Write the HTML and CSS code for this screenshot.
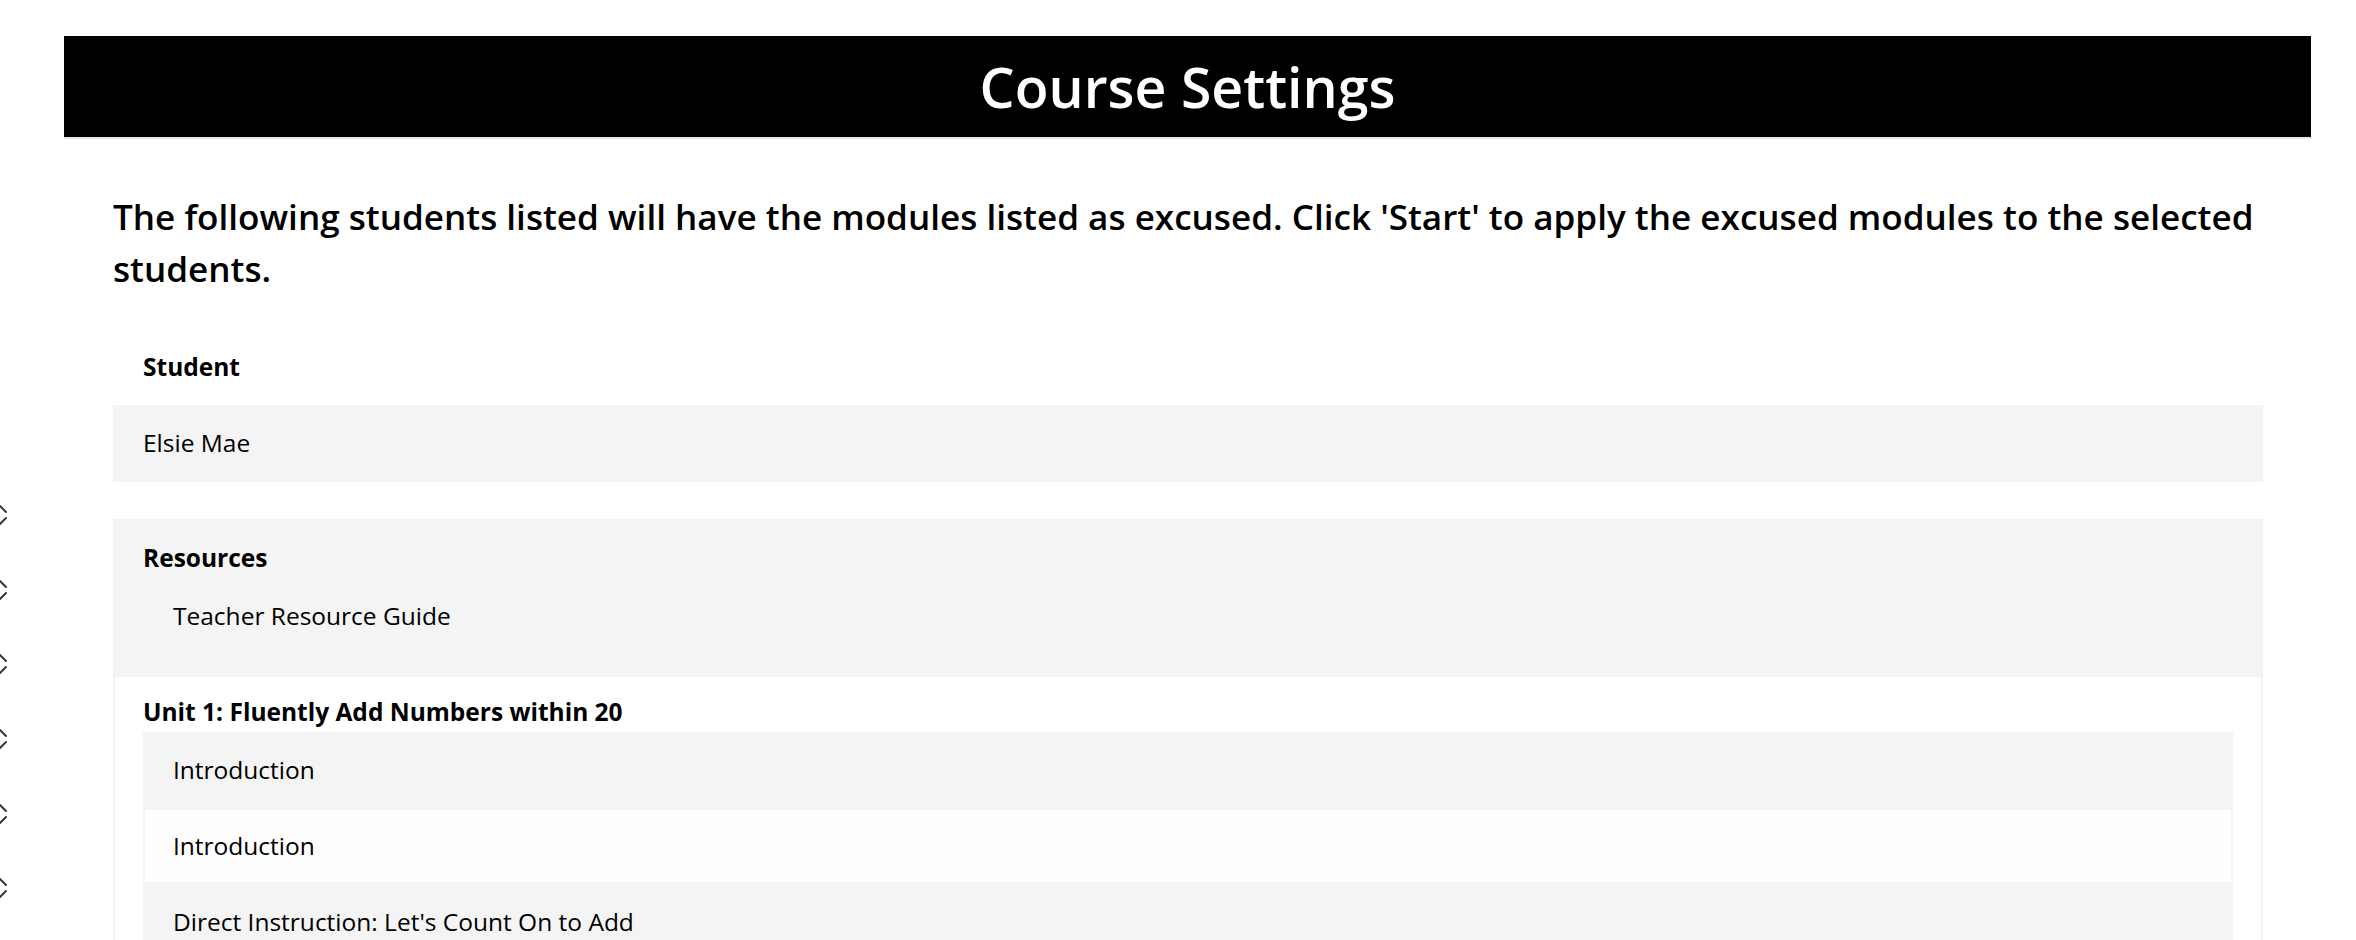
FILE: index.html
```html
<!DOCTYPE html>
<html lang="en">
<head>
<meta charset="utf-8">
<title>Course Settings</title>
<link rel="stylesheet" href="styles.css">
</head>
<body>
<div class="layout">
  <nav class="rail">
    <span class="rail-item"><svg class="chev" viewBox="0 0 20 22" width="20" height="22"><path d="M4 8 L10 2 L16 8 M4 14 L10 20 L16 14"/></svg></span>
    <span class="rail-item"><svg class="chev" viewBox="0 0 20 22" width="20" height="22"><path d="M4 8 L10 2 L16 8 M4 14 L10 20 L16 14"/></svg></span>
    <span class="rail-item"><svg class="chev" viewBox="0 0 20 22" width="20" height="22"><path d="M4 8 L10 2 L16 8 M4 14 L10 20 L16 14"/></svg></span>
    <span class="rail-item"><svg class="chev" viewBox="0 0 20 22" width="20" height="22"><path d="M4 8 L10 2 L16 8 M4 14 L10 20 L16 14"/></svg></span>
    <span class="rail-item"><svg class="chev" viewBox="0 0 20 22" width="20" height="22"><path d="M4 8 L10 2 L16 8 M4 14 L10 20 L16 14"/></svg></span>
    <span class="rail-item"><svg class="chev" viewBox="0 0 20 22" width="20" height="22"><path d="M4 8 L10 2 L16 8 M4 14 L10 20 L16 14"/></svg></span>
  </nav>
  <main class="main">
    <header class="titlebar"><h1 class="title">Course Settings</h1></header>
    <section class="content">
      <p class="intro">The following students listed will have the modules listed as excused. Click 'Start' to apply the excused modules to the selected students.</p>
      <div class="table-head">Student</div>
      <div class="student-row">Elsie Mae</div>

      <div class="group group-shaded">
        <div class="group-title">Resources</div>
        <div class="row">Teacher Resource Guide</div>
      </div>

      <div class="group">
        <div class="group-title">Unit 1: Fluently Add Numbers within 20</div>
        <div class="row row-shaded">Introduction</div>
        <div class="row">Introduction</div>
        <div class="row row-shaded">Direct Instruction: Let's Count On to Add</div>
      </div>
    </section>
  </main>
</div>
</body>
</html>
```

FILE: styles.css
```css
* { box-sizing: border-box; }

html, body {
  margin: 0;
  padding: 0;
  background: #ffffff;
}

body {
  font-family: "Open Sans", "Noto Sans", sans-serif;
  color: #000000;
  overflow: hidden;
}

.layout {
  display: flex;
  align-items: flex-start;
}

.rail {
  flex: 0 0 20px;
  width: 20px;
  margin-left: -10px;
  padding-top: 478px;
  display: flex;
  flex-direction: column;
}

.rail-item {
  height: 74.6px;
  display: flex;
  align-items: center;
  justify-content: center;
}

.chev {
  display: block;
  fill: none;
  stroke: #33383e;
  stroke-width: 2;
  stroke-linecap: round;
  stroke-linejoin: round;
}

.main {
  flex: 1 1 auto;
  min-width: 0;
  margin-left: 54px;
  margin-right: 45px;
}

.titlebar {
  margin-top: 36px;
  height: 101px;
  background: #000000;
  box-shadow: 0 2px 0 #e4e4e4;
  display: flex;
  align-items: center;
  justify-content: center;
}

.title {
  margin: 0;
  color: #ffffff;
  font-size: 55.4px;
  font-weight: 600;
  line-height: 1;
}

.content {
  padding: 0 48px 0 49px;
}

.intro {
  margin: 53px 0 0;
  font-size: 35.1px;
  font-weight: 600;
  line-height: 52px;
}

.table-head {
  margin-top: 34px;
  padding: 21px 30px 20px;
  font-size: 24.5px;
  font-weight: 700;
  line-height: 36px;
}

.student-row {
  background: #f4f4f4;
  padding: 20px 30px 21px;
  font-size: 24.5px;
  line-height: 36px;
}

.group {
  margin-top: 37px;
  border: 2px solid #f4f4f4;
  padding: 17.5px 28px 20.5px;
  background: #ffffff;
}

.group-shaded {
  padding-top: 19px;
  padding-bottom: 19px;
}

.group + .group {
  margin-top: 0;
}

.group-shaded {
  background: #f4f4f4;
}

.group-title {
  font-size: 24.5px;
  font-weight: 700;
  line-height: 36px;
  margin-bottom: 1.5px;
}

.row {
  border: 2px solid #f4f4f4;
  padding: 18px 28px;
  font-size: 24.5px;
  line-height: 36px;
  background: #fefefe;
}

.row-shaded,
.group-shaded .row {
  background: #f4f4f4;
}
```
